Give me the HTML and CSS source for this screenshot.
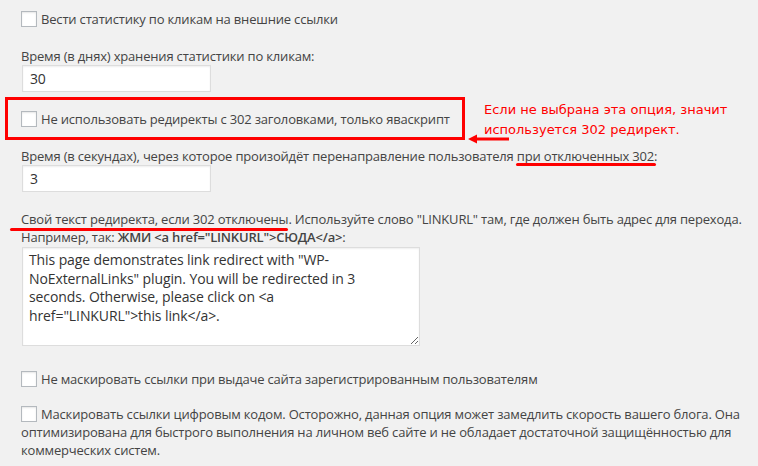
FILE: index.html
```html
<!DOCTYPE html>
<html lang="ru">
<head>
<meta charset="utf-8">
<link rel="stylesheet" href="styles.css">
</head>
<body>
<div class="page">
  <div class="check-row first"><span class="cb"></span><span>Вести статистику по кликам на внешние ссылки</span></div>

  <div class="label lbl-days">Время (в днях) хранения статистики по кликам:</div>
  <div class="input">30</div>

  <div class="highlight-row">
    <div class="redbox"><span class="cb"></span><span>Не использовать редиректы с 302 заголовками, только яваскрипт</span></div>
    <div class="note">Если не выбрана эта опция, значит<br>используется 302 редирект.<span class="arrow"><svg width="42" height="10" viewBox="0 0 42 10"><path d="M0 5 L9 0.5 L9 3.6 L41 3.6 L41 6.4 L9 6.4 L9 9.5 Z" fill="#f00"/></svg></span></div>
  </div>

  <div class="label lbl-secs">Время (в секундах), через которое произойдёт перенаправление пользователя <span class="mark mark-a">при отключенных 302</span>:</div>
  <div class="input">3</div>

  <div class="label lbl-text"><span class="mark mark-b">Свой текст редиректа, если 302 отключены</span>. Используйте слово "LINKURL" там, где должен быть адрес для перехода. Например, так: <b>ЖМИ &lt;a href="LINKURL"&gt;СЮДА&lt;/a&gt;</b>:</div>
  <textarea class="area">This page demonstrates link redirect with "WP-NoExternalLinks" plugin. You will be redirected in 3 seconds. Otherwise, please click on &lt;a href="LINKURL"&gt;this link&lt;/a&gt;.</textarea>

  <div class="check-row opt3"><span class="cb"></span><span>Не маскировать ссылки при выдаче сайта зарегистрированным пользователям</span></div>

  <p class="check-para"><span class="cb"></span>Маскировать ссылки цифровым кодом. Осторожно, данная опция может замедлить скорость вашего блога. Она оптимизирована для быстрого выполнения на личном веб сайте и не обладает достаточной защищённостью для коммерческих систем.</p>
</div>
</body>
</html>
```

FILE: styles.css
```css
html, body {
  margin: 0;
  padding: 0;
  background: #f1f1f1;
}
body {
  font-family: "Open Sans", "Noto Sans", sans-serif;
  font-size: 13px;
  line-height: 18px;
  letter-spacing: -0.18px;
  color: #444;
  width: 758px;
  height: 466px;
  overflow: hidden;
}
.page {
  padding: 0 6px 0 21px;
}
.cb {
  display: inline-block;
  box-sizing: border-box;
  width: 16px;
  height: 16px;
  border: 1px solid #b4b9be;
  background: #fff;
  box-shadow: inset 0 1px 2px rgba(0,0,0,0.1);
  margin-right: 4px;
  flex: none;
}
.check-row {
  display: flex;
  align-items: center;
  height: 18px;
}
.check-row.first {
  margin-top: 10px;
}
.label {
  line-height: 18px;
}
.lbl-days {
  margin-top: 19px;
}
.input {
  box-sizing: border-box;
  width: 189px;
  height: 27px;
  margin-left: 1px;
  background: #fff;
  border: 1px solid #ddd;
  box-shadow: inset 0 1px 2px rgba(0,0,0,0.07);
  padding: 3px 7px;
  font-size: 14px;
  line-height: 19px;
  color: #333;
}
.highlight-row {
  display: flex;
  align-items: flex-start;
  margin-top: 5px;
  margin-left: -16px;
}
.redbox {
  box-sizing: border-box;
  width: 460px;
  height: 43px;
  border: 3px solid #f00;
  display: flex;
  align-items: center;
  padding-left: 13px;
}
.note {
  position: relative;
  margin-left: 19px;
  margin-top: 3px;
  font-family: "DejaVu Sans", sans-serif;
  font-size: 13px;
  line-height: 20px;
  letter-spacing: 0;
  color: #f00;
}
.arrow {
  position: absolute;
  left: -16px;
  top: 34px;
  line-height: 0;
}
.lbl-secs {
  margin-top: 7px;
}
.mark {
  position: relative;
}
.mark::after {
  content: "";
  position: absolute;
  height: 3px;
  border-radius: 2px;
  background: #f00;
}
.mark-a::after {
  left: -1px;
  right: -2px;
  bottom: -1px;
}
.mark-b::after {
  left: -11px;
  right: 0;
  bottom: -3px;
}
.lbl-text {
  margin-top: 18px;
}
.lbl-text b {
  font-weight: 600;
}
.area {
  display: block;
  box-sizing: border-box;
  width: 398px;
  height: 99px;
  margin: 1px 0 0 1px;
  border: 1px solid #ddd;
  background: #fff;
  box-shadow: inset 0 1px 2px rgba(0,0,0,0.07);
  padding: 3px 24px 3px 6px;
  font-family: "Open Sans", "Noto Sans", sans-serif;
  font-size: 14px;
  line-height: 18.6px;
  letter-spacing: -0.1px;
  color: #333;
  outline: none;
}
.check-row.opt3 {
  margin-top: 24px;
}
.check-para {
  margin: 17px 0 0 0;
  line-height: 18px;
}
.check-para .cb {
  vertical-align: -3px;
}
```
